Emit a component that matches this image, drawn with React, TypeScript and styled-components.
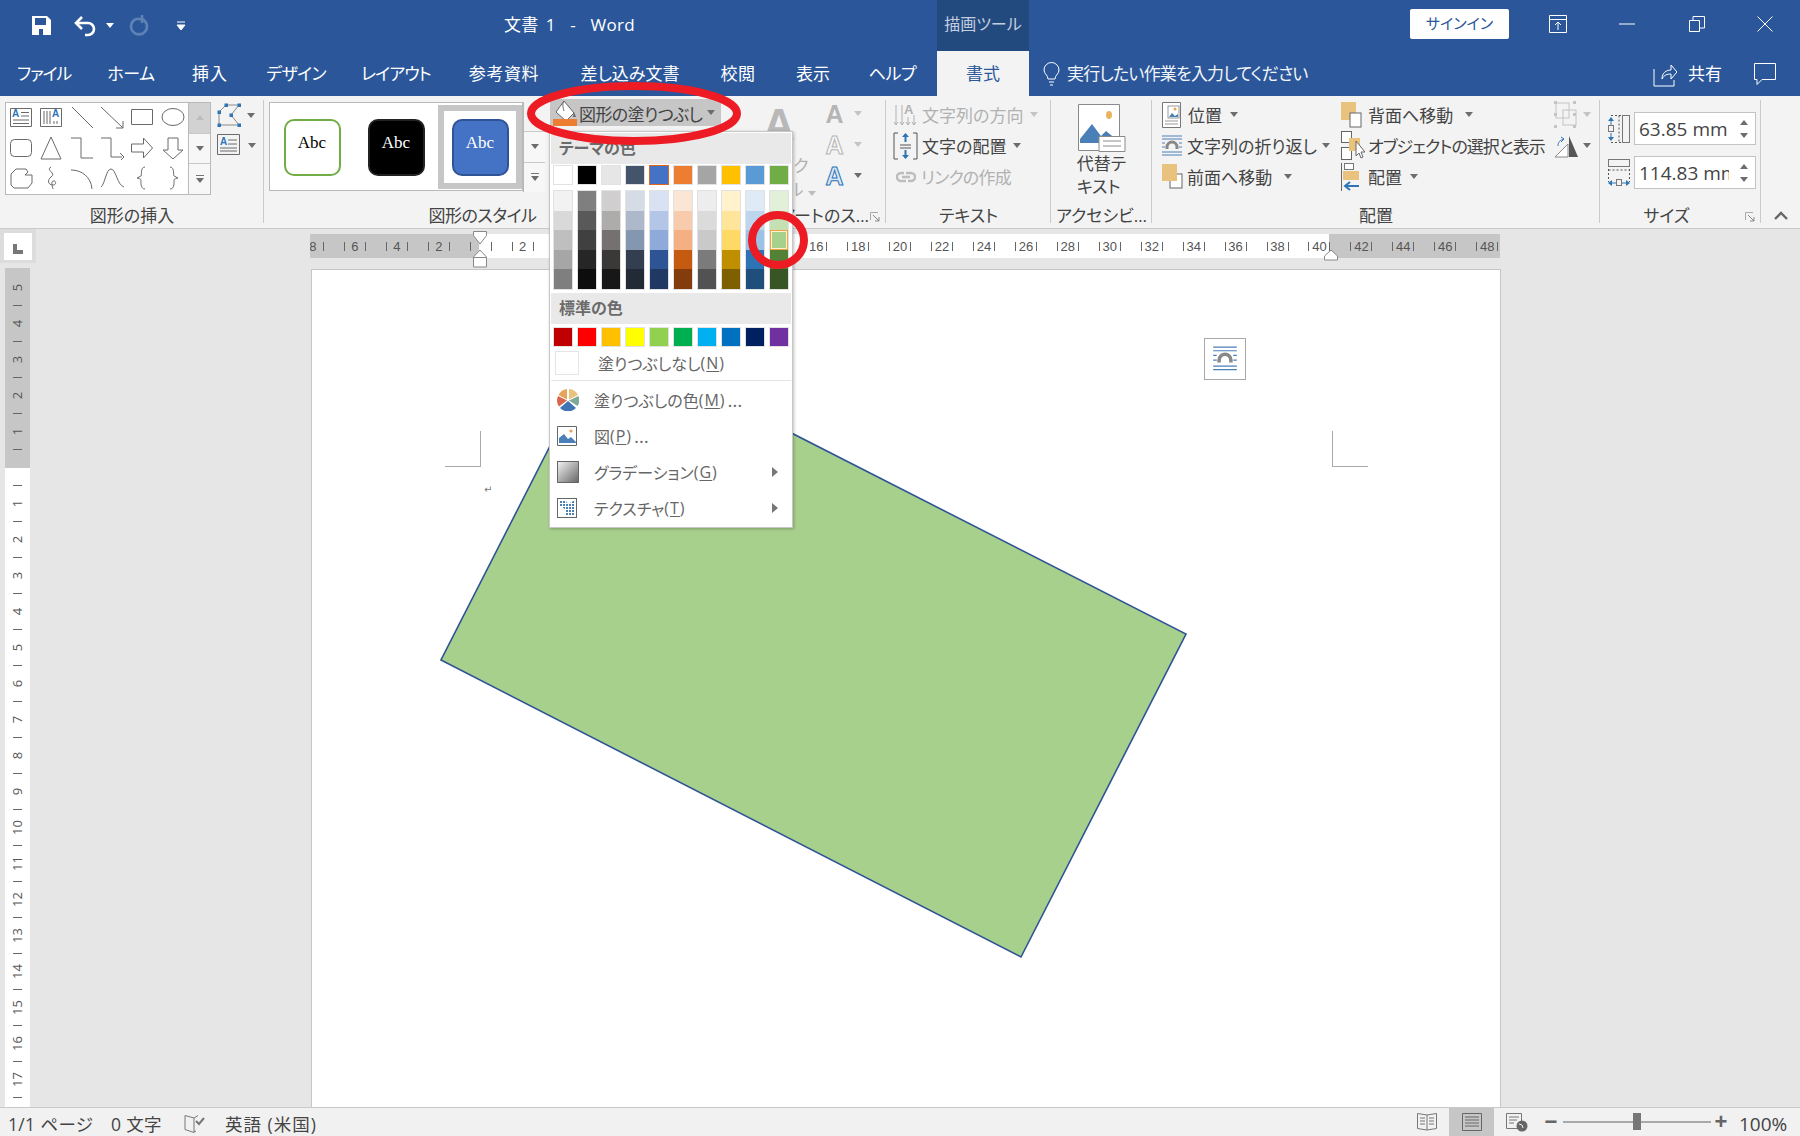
import React from "react";
import styled, { createGlobalStyle } from "styled-components";

const GlobalStyle = createGlobalStyle`
  html, body { margin: 0; padding: 0; background: #e6e6e6; }
  * { box-sizing: border-box; }
  body {
    font-family: "Open Sans", "Noto Sans CJK JP", sans-serif;
    font-feature-settings: "palt";
    font-size: 17px;
    color: #444;
  }
`;

const BLUE = "#2b579a";

const Root = styled.div`
  position: relative;
  width: 1800px;
  height: 1136px;
  overflow: hidden;
  display: flex;
  flex-direction: column;
`;

/* title bar */
const TitleBar = styled.div`
  height: 51px;
  background: ${BLUE};
  display: flex;
  color: #fff;
`;
const Qat = styled.div`
  width: 504px;
  padding-left: 32px;
  display: flex;
  align-items: center;
`;
const QatSlot = styled.div<{ $w: number }>`
  width: ${(p) => p.$w}px;
  display: flex;
  align-items: center;
`;
const DocTitle = styled.div`
  width: 433px;
  line-height: 49px;
  font-size: 17px;
  letter-spacing: 0.3px;
  word-spacing: 2.5px;
`;
const ToolsTab = styled.div`
  width: 92px;
  background: #234a7e;
  color: #c3cfe0;
  text-align: center;
  line-height: 49px;
  font-size: 16px;
`;
const WindowArea = styled.div`
  flex: 1;
  display: flex;
  align-items: center;
  padding-left: 381px;
`;
const SignIn = styled.div`
  width: 99px;
  height: 30px;
  margin-top: -3px;
  border-radius: 2px;
  background: #fff;
  color: ${BLUE};
  text-align: center;
  line-height: 29px;
  font-size: 15px;
`;
const WinBtn = styled.div<{ $w: number }>`
  width: ${(p) => p.$w}px;
  display: flex;
  justify-content: center;
  margin-top: -3px;
`;

/* tabs */
const TabRow = styled.div`
  height: 45px;
  background: ${BLUE};
  display: flex;
  color: #fff;
  line-height: 45px;
`;
const Tab = styled.div<{ $w: number; $ls?: number; $active?: boolean }>`
  width: ${(p) => p.$w}px;
  flex-shrink: 0;
  text-align: center;
  letter-spacing: ${(p) => p.$ls ?? 0}px;
  background: ${(p) => (p.$active ? "#f3f3f3" : "transparent")};
  color: ${(p) => (p.$active ? BLUE : "#fff")};
`;
const TellMe = styled.div`
  display: flex;
  align-items: center;
  gap: 7px;
  padding-left: 14px;
  width: 602px;
  flex-shrink: 0;
  color: #f2f5f9;
  letter-spacing: -0.8px;
`;
const Share = styled.div`
  display: flex;
  align-items: center;
  gap: 11px;
  padding-left: 22px;
  width: 123px;
  flex-shrink: 0;
`;
const Comment = styled.div`
  display: flex;
  align-items: center;
`;

/* ribbon */
const Ribbon = styled.div`
  height: 133px;
  background: #f3f3f3;
  border-bottom: 1px solid #c9c9c9;
  display: flex;
  padding-top: 4px;
`;
const Group = styled.div<{ $w: number; $plain?: boolean }>`
  position: relative;
  width: ${(p) => p.$w}px;
  flex-shrink: 0;
  display: flex;
  flex-direction: column;
  &::after {
    content: "";
    display: ${(p) => (p.$plain ? "none" : "block")};
    position: absolute;
    right: 0;
    top: 0;
    bottom: 5px;
    width: 1px;
    background: #cbcbcb;
  }
`;
const GroupBody = styled.div<{ $pl?: number; $pt?: number }>`
  flex: 1;
  min-height: 0;
  display: flex;
  padding-left: ${(p) => p.$pl ?? 0}px;
  padding-top: ${(p) => p.$pt ?? 0}px;
`;
const GroupLabel = styled.div<{ $pr?: number; $ls?: number }>`
  height: 24px;
  line-height: 24px;
  text-align: center;
  white-space: nowrap;
  overflow: hidden;
  letter-spacing: ${(p) => p.$ls ?? 0}px;
  padding-right: ${(p) => p.$pr ?? 0}px;
  color: #444;
`;
const Expander = styled.svg`
  position: absolute;
  right: 6px;
  bottom: 6px;
`;
const Gallery = styled.div<{ $mt: number; $h: number }>`
  margin-top: ${(p) => p.$mt}px;
  height: ${(p) => p.$h}px;
  display: flex;
  background: #fff;
  border: 1px solid #b9b9b9;
`;
const ShapeGrid = styled.div`
  width: 182px;
  margin-top: -1px;
  display: grid;
  grid-template-columns: repeat(6, 1fr);
  grid-auto-rows: 30.5px;
  place-items: center;
`;
const ScrollCol = styled.div<{ $mt?: number; $h?: number }>`
  width: 22px;
  margin-top: ${(p) => p.$mt ?? 0}px;
  ${(p) => (p.$h ? `height: ${p.$h}px;` : "")}
  display: flex;
  flex-direction: column;
  border-left: 1px solid #b9b9b9;
  background: #f3f3f3;
`;
const ScrollBtn = styled.div<{ $off?: boolean; $bare?: boolean }>`
  flex: 1;
  display: flex;
  flex-direction: column;
  align-items: center;
  justify-content: center;
  gap: 2px;
  background: ${(p) => (p.$off ? "#d2d2d2" : p.$bare ? "#f3f3f3" : "#f7f7f7")};
  border-bottom: 1px solid #c9c9c9;
  &:last-child { border-bottom: none; }
`;
const Tri = styled.span<{ $up?: boolean; $c?: string; $ml?: number }>`
  display: inline-block;
  flex-shrink: 0;
  margin-left: ${(p) => p.$ml ?? 0}px;
  width: 0;
  height: 0;
  border-left: 4px solid transparent;
  border-right: 4px solid transparent;
  ${(p) => (p.$up ? "border-bottom" : "border-top")}: 5px solid ${(p) => p.$c ?? "#6d6d6d"};
`;
const Dash = styled.span`
  display: block;
  width: 8px;
  height: 1px;
  background: #777;
`;
const SideTools = styled.div`
  width: 50px;
  margin-left: 6px;
  display: flex;
  flex-direction: column;
`;
const SideTool = styled.div`
  height: 30px;
  display: flex;
  align-items: center;
  gap: 4px;
`;
const StyleCell = styled.div<{ $sel?: boolean }>`
  width: 84px;
  height: 84px;
  display: flex;
  align-items: center;
  justify-content: center;
  margin-top: 2px;
  border: ${(p) => (p.$sel ? "6px solid #c6c6c6" : "6px solid transparent")};
`;
const StyleChip = styled.div<{ $bg: string; $bd: string; $fg: string }>`
  width: 57px;
  height: 57px;
  border-radius: 10px;
  background: ${(p) => p.$bg};
  border: 2px solid ${(p) => p.$bd};
  color: ${(p) => p.$fg};
  display: flex;
  align-items: center;
  justify-content: center;
  font: 17px "Liberation Serif", serif;
  padding-bottom: 8px;
`;
const FillButton = styled.div`
  width: 171px;
  height: 27px;
  margin: -1px 0 0 5px;
  padding-left: 3px;
  background: #c6c6c6;
  display: flex;
  align-items: center;
  gap: 2px;
  color: #444;
  white-space: nowrap;
  letter-spacing: -0.6px;
`;
const FillLabel = styled.span`
  padding-top: 2px;
`;
const Rows = styled.div`
  margin-top: -1px;
  display: flex;
  flex-direction: column;
  flex-shrink: 0;
`;
const RowBtn = styled.div<{ $off?: boolean; $gap?: number; $ls?: number }>`
  height: 31px;
  display: flex;
  align-items: center;
  gap: ${(p) => p.$gap ?? 5}px;
  white-space: nowrap;
  letter-spacing: ${(p) => p.$ls ?? 0}px;
  color: ${(p) => (p.$off ? "#b1b1b1" : "#444")};
`;
const LinkSlot = styled.span`
  margin: 0 1px 0 3px;
`;
const QuickStyle = styled.div`
  width: 88px;
  display: flex;
  flex-direction: column;
  align-items: center;
  color: #b1b1b1;
  line-height: 24px;
  padding-left: 2px;
`;
const BigA = styled.div`
  font: bold 44px/50px "Liberation Sans", sans-serif;
  color: #b8b8b8;
  height: 54px;
`;
const LetterCol = styled.div`
  margin: -2px 0 0 2px;
  display: flex;
  flex-direction: column;
`;
const LetterRow = styled.div`
  height: 31px;
  display: flex;
  align-items: center;
  gap: 9px;
`;
const Letter = styled.span<{ $kind: "solid" | "line" | "blue" }>`
  font: bold 25px/30px "Liberation Sans", sans-serif;
  width: 21px;
  text-align: center;
  color: ${(p) => (p.$kind === "solid" ? "#b5b5b5" : p.$kind === "line" ? "#f7f7f7" : "#d8e8f7")};
  -webkit-text-stroke: ${(p) =>
    p.$kind === "line" ? "1px #b5b5b5" : p.$kind === "blue" ? "1px #2e75b6" : "0"};
`;
const BigButton = styled.div`
  width: 100%;
  display: flex;
  flex-direction: column;
  align-items: center;
  line-height: 23px;
`;
const ArrangeGrid = styled.div`
  display: grid;
  grid-template-columns: 179px 213px 1fr;
`;
const SizeCol = styled.div`
  display: flex;
  flex-direction: column;
  gap: 11px;
  padding-top: 12px;
`;
const SizeRow = styled.div`
  display: flex;
  align-items: center;
  gap: 4px;
`;
const SpinBox = styled.div`
  width: 122px;
  height: 33px;
  display: flex;
  align-items: center;
  background: #fff;
  border: 1px solid #c3c3c3;
  padding: 0 4px 0 4px;
  color: #444;
  font-size: 19px;
`;
const SpinValue = styled.div`
  width: 90px;
  overflow: hidden;
  white-space: nowrap;
`;
const SpinArrows = styled.div`
  width: 14px;
  margin-left: auto;
  display: flex;
  flex-direction: column;
  align-items: center;
  gap: 8px;
`;
const Collapse = styled.div`
  flex: 1;
  display: flex;
  align-items: flex-end;
  justify-content: center;
  padding-bottom: 8px;
`;

/* workspace */
const Workspace = styled.div`
  height: 879px;
  display: flex;
  background: #e6e6e6;
  border-bottom: 1px solid #c9c9c9;
`;
const LeftCol = styled.div`
  width: 36px;
  display: flex;
  flex-direction: column;
`;
const CornerWrap = styled.div`
  height: 34px;
  background: #dcdcdc;
  padding: 4px 4px 3px;
`;
const Corner = styled.div`
  height: 27px;
  background: #fff;
  display: flex;
  align-items: center;
  justify-content: center;
  padding-top: 5px;
`;
const VRuler = styled.div`
  width: 25px;
  margin: 5px 0 0 5px;
  flex: 1;
  min-height: 0;
  display: flex;
  flex-direction: column;
`;
const VSection = styled.div<{ $gray?: boolean; $pt: number; $h?: number }>`
  background: ${(p) => (p.$gray ? "#c6c6c6" : "#fff")};
  padding-top: ${(p) => p.$pt}px;
  ${(p) => (p.$h ? `height: ${p.$h}px;` : "flex: 1; min-height: 0; overflow: hidden;")}
`;
const VCell = styled.div`
  height: 18px;
  display: flex;
  align-items: center;
  justify-content: center;
  font-size: 13px;
  color: #555;
`;
const VNum = styled.span`
  display: block;
  transform: rotate(-90deg);
  line-height: 13px;
`;
const VTick = styled.span`
  width: 9px;
  height: 1px;
  background: #666;
`;
const MainCol = styled.div`
  flex: 1;
  min-width: 0;
  display: flex;
  flex-direction: column;
`;
const HRulerWrap = styled.div`
  position: relative;
  width: 1190px;
  margin: 5px 0 0 274px;
  height: 24px;
`;
const HRuler = styled.div`
  height: 24px;
  overflow: hidden;
  display: flex;
  background: linear-gradient(to right, #c6c6c6 169px, #fff 169px, #fff 1019px, #c6c6c6 1019px);
`;
const HCell = styled.div<{ $first?: boolean }>`
  flex: 0 0 41.95px;
  margin-left: ${(p) => (p.$first ? "-18px" : "0")};
  padding-top: 1px;
  display: flex;
  align-items: center;
  justify-content: center;
  font: 13px "Liberation Sans", sans-serif;
  color: #555;
`;
const HTick = styled.span`
  width: 1px;
  height: 9px;
  background: #666;
`;
const HNum = styled.span`
  width: 20px;
  text-align: center;
`;
const Marker = styled.svg<{ $x: number }>`
  position: absolute;
  top: -3px;
  left: ${(p) => p.$x}px;
`;
const Page = styled.div`
  position: relative;
  flex: 1;
  width: 1190px;
  margin: 11px 0 0 275px;
  background: #fff;
  border: 1px solid #c6c6c6;
  border-bottom: none;
`;
const ShapeCanvas = styled.svg`
  position: absolute;
  left: -1px;
  top: -1px;
`;
const Crop = styled.div<{ $x: number; $flip?: boolean }>`
  position: absolute;
  left: ${(p) => p.$x}px;
  top: 161px;
  width: 36px;
  height: 36px;
  border-bottom: 1px solid #a9a9a9;
  ${(p) => (p.$flip ? "border-left" : "border-right")}: 1px solid #a9a9a9;
`;
const ParaMark = styled.div`
  position: absolute;
  left: 172px;
  top: 214px;
  font: 10px "DejaVu Sans", sans-serif;
  color: #777;
`;
const Anchor = styled.div`
  position: absolute;
  left: 892px;
  top: 68px;
  width: 42px;
  height: 42px;
  background: #fff;
  border: 1px solid #a9a9a9;
  display: flex;
  align-items: center;
  justify-content: center;
`;

/* status bar */
const StatusBar = styled.div`
  height: 28px;
  background: #f1f1f1;
  display: flex;
  align-items: center;
  color: #444;
  font-size: 17.5px;
  white-space: nowrap;
`;
const StatusLeft = styled.div`
  display: flex;
  align-items: center;
  padding: 3px 0 0 8px;
  width: 1405px;
  letter-spacing: 0.35px;
`;
const StatusItem = styled.span<{ $w: number }>`
  width: ${(p) => p.$w}px;
  display: flex;
  align-items: center;
`;
const Lang = styled.span`
  letter-spacing: 1px;
`;
const ViewBtn = styled.div<{ $on?: boolean; $w: number }>`
  width: ${(p) => p.$w}px;
  height: 28px;
  background: ${(p) => (p.$on ? "#c6c6c6" : "transparent")};
  display: flex;
  align-items: center;
  justify-content: center;
`;
const Zoom = styled.div`
  width: 148px;
  height: 2px;
  background: #a9a9a9;
  margin: 0 2px 0 4px;
  position: relative;
`;
const ZoomThumb = styled.div`
  position: absolute;
  left: 70px;
  top: -8px;
  width: 8px;
  height: 17px;
  background: #777;
`;
const ZoomSign = styled.span<{ $ml?: number }>`
  width: 16px;
  margin-left: ${(p) => p.$ml ?? 0}px;
  font: bold 22px/24px "Liberation Sans", sans-serif;
  color: #666;
  text-align: center;
`;
const ZoomPct = styled.span`
  margin-left: 10px;
  padding-top: 3px;
  font-size: 19px;
`;

/* dropdown */
const Menu = styled.div`
  position: absolute;
  left: 549px;
  top: 131px;
  width: 244px;
  height: 397px;
  background: #fff;
  border: 1px solid #c6c6c6;
  box-shadow: 1px 1px 3px rgba(0, 0, 0, 0.25);
  padding: 1px;
  display: flex;
  flex-direction: column;
`;
const MenuHead = styled.div<{ $mt?: number }>`
  height: 31px;
  flex-shrink: 0;
  margin-top: ${(p) => p.$mt ?? 0}px;
  background: #e9e9e9;
  padding-left: 8px;
  font-weight: 700;
  line-height: 31px;
  color: #6b6b6b;
  font-size: 16px;
`;
const SwatchRow = styled.div<{ $mt: number }>`
  display: grid;
  grid-template-columns: repeat(10, 20px);
  column-gap: 4px;
  padding-left: 2px;
  margin-top: ${(p) => p.$mt}px;
`;
const Swatch = styled.div<{ $c: string; $sel?: boolean }>`
  height: 20px;
  background: ${(p) => p.$c};
  border: 1px solid ${(p) => (p.$sel ? "#e2631a" : "#e2e2e2")};
`;
const Ramp = styled.div`
  display: flex;
  flex-direction: column;
  border: 1px solid #e2e2e2;
`;
const RampCell = styled.div<{ $c: string; $sel?: boolean }>`
  height: 19.6px;
  background: ${(p) => p.$c};
  ${(p) => (p.$sel ? "outline: 1px solid #f2a33a; outline-offset: -1px; box-shadow: inset 0 0 0 2px #fff2d6; position: relative;" : "")}
`;
const NoFill = styled.div`
  height: 34px;
  flex-shrink: 0;
  display: flex;
  align-items: center;
  padding-left: 4px;
  border-bottom: 1px solid #e3e3e8;
  color: #666;
  font-size: 16px;
`;
const NoFillBox = styled.span`
  width: 24px;
  height: 24px;
  margin-right: 19px;
  border: 1px solid #e3e3e8;
`;
const MenuItems = styled.div`
  padding-top: 1px;
`;
const MenuItem = styled.div`
  height: 36px;
  display: flex;
  align-items: center;
  padding-left: 6px;
  color: #666;
  font-size: 16px;
`;
const MenuIcon = styled.span`
  width: 37px;
  display: flex;
`;
const MenuArrow = styled.span`
  margin-left: auto;
  margin-right: 13px;
  width: 0;
  height: 0;
  border-top: 5px solid transparent;
  border-bottom: 5px solid transparent;
  border-left: 6px solid #777;
`;
const Mnem = styled.span`
  letter-spacing: 1px;
`;
const Dots = styled.span`
  font-family: "Open Sans", sans-serif;
  font-size: 19px;
  line-height: 16px;
  margin-left: 2px;
`;
const Key = styled.u`
  text-underline-offset: 2px;
`;
const Annotations = styled.svg`
  position: absolute;
  left: 0;
  top: 0;
  pointer-events: none;
`;

/* icons */
const S = "#6a6a6a";
const L = "#4a7fb8";
const G = "#e9c27e";

const Ico = ({ w = 24, h = 24, vb, children }: { w?: number; h?: number; vb?: string; children: React.ReactNode }) => (
  <svg width={w} height={h} viewBox={vb ?? `0 0 ${w} ${h}`} fill="none" style={{ display: "block", flexShrink: 0 }}>
    {children}
  </svg>
);

const gl = (d: string, extra?: React.ReactNode) => (
  <Ico>
    <path d={d} stroke={S} strokeWidth="1" />
    {extra}
  </Ico>
);

const GalleryA = ({ x, y }: { x: number; y: number }) => (
  <text x={x} y={y} fontSize="10" fontWeight="700" fontFamily="Liberation Sans" fill="#2e75b6">A</text>
);

const shapeIcons = [
  gl("M1.5 3.5h21v18h-21zM12 7.5h8M12 11h8M4 15h16M4 18.5h16", <GalleryA x={3} y={12} />),
  gl("M1.5 3.5h21v18h-21zM5 6v13M8 6v13M11 6v13M15 16v3M18 16v3", <GalleryA x={13} y={12} />),
  gl("M2 2l21 21"),
  gl("M1 2l22 21M23 16v7h-7"),
  gl("M1.5 4.5h21v15h-21z"),
  <Ico key="oval"><ellipse cx="12" cy="12" rx="11" ry="8.5" stroke={S} /></Ico>,
  <Ico key="rr"><rect x="1.5" y="3.5" width="21" height="17" rx="4" stroke={S} /></Ico>,
  gl("M12 1L2 23h20z"),
  gl("M1 2h10v20h12"),
  gl("M1 2h10v19h11M20 17l4 4-4 4"),
  gl("M1.5 8h12V2l9 10-9 10v-6h-12z"),
  gl("M7 2h10v12h5L12 23 2 14h5z"),
  gl("M7 3h10l2 3-3 3h7v8l-4 5H5l-3-3V8z"),
  gl("M12 1c-6 3 6 6 0 10-4 3-3 8 2 8 4 0 3-5 0-4-2 1-1 4 0 8M12 1"),
  gl("M1 4c11 0 20 7 21 19"),
  gl("M1 21C5 18 6 3 11 3s6 16 13 18"),
  gl("M15 1c-5 0-3 9-4 9s-3 2-4 2c1 0 4 1 4 2s-1 9 4 9"),
  gl("M9 1c5 0 3 9 4 9s3 2 4 2c-1 0-4 1-4 2s1 9-4 9"),
];

const EditPoints = () => (
  <Ico w={26} h={26}>
    <path d="M2 10L9 3h13l-8 10 8 10H2z" stroke="#8a8a8a" />
    {[[2, 10], [9, 3], [22, 3], [14, 13], [22, 23], [2, 23]].map(([x, y]) => (
      <rect key={`${x}-${y}`} x={x - 1.5} y={y - 1.5} width="3.5" height="3.5" fill="#2e75b6" />
    ))}
  </Ico>
);
const TextBoxTool = () => (
  <Ico w={24} h={22}>
    <path d="M.5.5h22v20H.5zM11 6h9M11 10h9M3 14h17M3 17h17" stroke={S} />
    <GalleryA x={3} y={11} />
  </Ico>
);
const Bucket = () => (
  <Ico w={24} h={26}>
    <path d="M11 1l10 12-8 8-10-9z" fill="#fff" stroke="#666" />
    <path d="M11 2c-2 0-1 6 0 9" stroke="#666" />
    <path d="M21 12l2 5-3 0z" fill="#666" />
    <rect x="0" y="19" width="24" height="7" fill="#ed7d31" />
  </Ico>
);
const TextDir = () => (
  <Ico w={25} h={28}>
    <path d="M3 4v20M9 4v20M21 14v10M1 21l2 3 2-3M7 21l2 3 2-3M19 21l2 3 2-3M15 16v8M13 21l2 3 2-3" stroke="#b1b1b1" />
    <text x="11" y="13" fontSize="13" fontWeight="700" fontFamily="Liberation Sans" fill="#b1b1b1">A</text>
  </Ico>
);
const TextAlign = () => (
  <Ico w={25} h={28}>
    <path d="M5 1H1v26h4M20 1h4v26h-4M7 13h11M7 16h11" stroke="#555" />
    <path d="M12.5 2v8M12.5 18v8" stroke="#2e75b6" strokeWidth="2" />
    <path d="M9 5l3.5-4L16 5zM9 23l3.5 4 3.5-4z" fill="#2e75b6" />
  </Ico>
);
const LinkIcon = () => (
  <Ico w={20} h={14}>
    <path d="M8 3H5a4 4 0 000 8h5M12 11h3a4 4 0 000-8h-5M6 7h8" stroke="#bdbdbd" strokeWidth="2.5" />
  </Ico>
);
const AltText = () => (
  <Ico w={48} h={48}>
    <path d="M.5.5h41v46H.5z" fill="#fff" stroke="#8a8a8a" />
    <ellipse cx="31" cy="11" rx="3" ry="4" fill="#e9b45f" />
    <path d="M2 35L14 20l9 12 5-5 11 9v3H2z" fill="#4a7fb8" />
    <path d="M21 32.5h26v15H21z" fill="#fff" stroke="#8a8a8a" />
    <path d="M25 37h18M25 42h18" stroke="#8a8a8a" />
  </Ico>
);
const PositionIcon = () => (
  <Ico w={20} h={26}>
    <path d="M.5.5h18v25H.5z" fill="#fff" stroke="#777" />
    <path d="M3 19h13M3 22h13" stroke="#999" />
    <rect x="6" y="4" width="11" height="12" fill="#fff" stroke="#999" />
    <path d="M7 15l3-4 3 3 3-2v3z" fill="#4a7fb8" />
    <circle cx="13" cy="7" r="1.5" fill="#e9a04f" />
  </Ico>
);
const WrapIcon = ({ w = 20, h = 22 }: { w?: number; h?: number }) => (
  <Ico w={w} h={h} vb="0 0 20 22">
    <path d="M0 1h20M0 4h20M0 8h3M17 8h3M0 12h3M17 12h3M0 17h20M0 20h20" stroke={L} />
    <path d="M5 14v-2a5 5 0 0110 0v2" stroke="#888" strokeWidth="3" />
  </Ico>
);
const FrontIcon = () => (
  <Ico w={21} h={26}>
    <rect x="8" y="10" width="12" height="14" fill="#fff" stroke="#666" />
    <rect x="0" y="0" width="15" height="17" fill={G} />
  </Ico>
);
const BackIcon = () => (
  <Ico w={21} h={26}>
    <rect x="0" y="0" width="15" height="18" fill={G} />
    <rect x="9" y="11" width="11" height="14" fill="#fff" stroke="#666" />
  </Ico>
);
const SelectIcon = () => (
  <Ico w={24} h={29}>
    <rect x=".5" y=".5" width="10" height="11" fill="#fff" stroke="#666" />
    <rect x=".5" y="16.5" width="10" height="12" fill="#fff" stroke="#666" />
    <rect x="8" y="7" width="11" height="13" fill={G} />
    <path d="M15 10v15l3-3 2 5 2-1-2-5h4z" fill="#fff" stroke="#666" />
  </Ico>
);
const AlignIcon = () => (
  <Ico w={20} h={28}>
    <path d="M.5 0v28" stroke="#666" />
    <rect x="3.5" y=".5" width="9" height="6" fill="#fff" stroke="#777" />
    <rect x="2" y="8" width="16" height="9" fill={G} />
    <path d="M18 23H5M9 19l-5 4 5 4" stroke="#2e75b6" strokeWidth="2" />
  </Ico>
);
const GroupIcon = () => (
  <Ico w={24} h={27}>
    <rect x="2" y="2" width="13" height="15" stroke="#c4c4c4" />
    <rect x="9" y="9" width="13" height="15" stroke="#c4c4c4" />
    {[[0, 0], [19, 0], [0, 24], [19, 24], [0, 12], [19, 12]].map(([x, y]) => (
      <rect key={`${x}-${y}`} x={x} y={y} width="3" height="3" fill="#c4c4c4" />
    ))}
  </Ico>
);
const RotateIcon = () => (
  <Ico w={24} h={24}>
    <path d="M1 23L14 10v13z" fill="#fff" stroke="#8a8a8a" />
    <path d="M15 2l9 21h-9z" fill="#555" />
    <path d="M4 12c0-4 2-6 6-7M7 3l3 2-3 3" stroke="#2e75b6" />
  </Ico>
);
const HeightIcon = () => (
  <Ico w={22} h={28}>
    <path d="M3 .5h11M3 27.5h11M11 .5v27" stroke="#555" strokeDasharray="2 2" />
    <rect x="14.5" y=".5" width="7" height="27" stroke="#777" />
    <path d="M3 3v7M3 18v7" stroke="#2e75b6" />
    <path d="M0 6l3-4 3 4zM0 22l3 4 3-4z" fill="#2e75b6" />
    <rect x=".5" y="10.5" width="5" height="6" stroke="#777" />
  </Ico>
);
const WidthIcon = () => (
  <Ico w={22} h={28}>
    <rect x=".5" y=".5" width="21" height="7" stroke="#777" />
    <path d="M.5 10v13M21.5 10v13M.5 11h21" stroke="#555" strokeDasharray="2 2" />
    <rect x="8.5" y="20.5" width="5" height="6" stroke="#777" />
    <path d="M3 24h5M14 24h5" stroke="#2e75b6" />
    <path d="M4 21l-4 3 4 3zM18 21l4 3-4 3z" fill="#2e75b6" />
  </Ico>
);
const Pie = () => (
  <Ico w={22} h={22}>
    <path d="M12 10.500V0a11 11 0 019 6z" fill="#e9c27e" />
    <path d="M12 11.500l9.500-4.500a11 11 0 01-1 10z" fill="#7fa898" />
    <path d="M11 12l8 7a11 11 0 01-16 0z" fill="#3f74b5" />
    <path d="M10 11.500l-8 6a11 11 0 01-1-10.500z" fill="#d9664a" />
    <path d="M10 10.500L1.500 6a11 11 0 018.500-6z" fill="#e6a35c" />
  </Ico>
);
const PictureItem = () => (
  <Ico w={20} h={20}>
    <path d="M.5.5h19v19H.5z" fill="#fff" stroke="#666" />
    <circle cx="14" cy="5" r="1.6" fill="#e9a04f" />
    <path d="M2 17v-5l5-4 4 5 3-2 5 5v1z" fill="#4a7fb8" />
  </Ico>
);
const GradientItem = () => (
  <Ico w={22} h={22}>
    <defs>
      <linearGradient id="gi" x1="0" y1="0" x2="1" y2="1">
        <stop offset="0" stopColor="#f4f4f4" />
        <stop offset="1" stopColor="#666" />
      </linearGradient>
    </defs>
    <rect x=".5" y=".5" width="21" height="21" fill="url(#gi)" stroke="#666" />
  </Ico>
);
const TextureItem = () => (
  <Ico w={20} h={20}>
    <defs>
      <pattern id="tx" width="3" height="3" patternUnits="userSpaceOnUse">
        <rect width="2" height="2" fill="#4a7fb8" />
      </pattern>
    </defs>
    <rect x=".5" y=".5" width="19" height="19" fill="#fff" stroke="#666" />
    <path d="M2 2h6l3 4 7-4v16H9V12L5 9H2z" fill="url(#tx)" />
  </Ico>
);

const themeTop = ["#ffffff", "#000000", "#e7e6e6", "#44546a", "#4472c4", "#ed7d31", "#a5a5a5", "#ffc000", "#5b9bd5", "#70ad47"];
const ramps = [
  ["#f2f2f2", "#d9d9d9", "#bfbfbf", "#a6a6a6", "#7f7f7f"],
  ["#7f7f7f", "#595959", "#404040", "#262626", "#0d0d0d"],
  ["#d0cece", "#aeabab", "#767171", "#3b3838", "#181717"],
  ["#d6dce5", "#adb9ca", "#8497b0", "#333f50", "#222a35"],
  ["#d9e2f3", "#b4c6e7", "#8eaadb", "#2f5496", "#1f3864"],
  ["#fbe5d5", "#f7cbac", "#f4b083", "#c55a11", "#833c0b"],
  ["#ededed", "#dbdbdb", "#c9c9c9", "#7b7b7b", "#525252"],
  ["#fff2cc", "#fee599", "#ffd965", "#bf8f00", "#7f6000"],
  ["#deeaf6", "#bdd6ee", "#9cc3e5", "#2e74b5", "#1e4e79"],
  ["#e2efd9", "#c5e0b3", "#a8d08d", "#538135", "#375623"],
];
const standard = ["#c00000", "#ff0000", "#ffc000", "#ffff00", "#92d050", "#00b050", "#00b0f0", "#0070c0", "#002060", "#7030a0"];

const tabs: [string, number, number][] = [
  ["ファイル", 88, -1.2], ["ホーム", 86, -0.4], ["挿入", 72, 1], ["デザイン", 100, -0.7], ["レイアウト", 100, -0.9],
  ["参考資料", 116, 0.6], ["差し込み文書", 136, 0], ["校閲", 80, 0.5], ["表示", 70, 0], ["ヘルプ", 89, -0.4],
];
const hLabels = ["8", "6", "4", "2", "", ...Array.from({ length: 24 }, (_, i) => String((i + 1) * 2))];

const ExpanderIcon = () => (
  <Expander width="10" height="10" viewBox="0 0 10 10" fill="none">
    <path d="M.5 8V.5H8" stroke="#aaa" />
    <path d="M3 3l6 6M9 5v4H5" stroke="#888" />
  </Expander>
);

export default function App() {
  return (
    <Root>
      <GlobalStyle />
      <TitleBar>
        <Qat>
          <QatSlot $w={41}>
            <Ico w={19} h={19}>
              <path d="M0 0h15l4 4v15H0z" fill="#fff" />
              <path d="M3 2h11v7H3z" fill={BLUE} />
              <path d="M7 13h4v6H7z" fill={BLUE} />
            </Ico>
          </QatSlot>
          <QatSlot $w={55}>
            <Ico w={24} h={22}>
              <path d="M4 8h11a6 6 0 010 12h-3" stroke="#fff" strokeWidth="2.6" />
              <path d="M9 2L3 8l6 6" stroke="#fff" strokeWidth="2.6" />
            </Ico>
            <Tri $c="#fff" $ml={9} />
          </QatSlot>
          <QatSlot $w={48}>
            <Ico w={22} h={24}>
              <path d="M14 5a8 8 0 11-6 0" stroke="#5f82b5" strokeWidth="2.6" />
              <path d="M14 1v8M8 5h7" stroke="#5f82b5" strokeWidth="2.6" />
            </Ico>
          </QatSlot>
          <QatSlot $w={20}>
            <Ico w={10} h={10}>
              <path d="M1 1h8M1 4h8l-4 5z" stroke="#fff" fill="#fff" />
            </Ico>
          </QatSlot>
        </Qat>
        <DocTitle>文書 1 &nbsp;-&nbsp; Word</DocTitle>
        <ToolsTab>描画ツール</ToolsTab>
        <WindowArea>
          <SignIn>サインイン</SignIn>
          <WinBtn $w={98}>
            <Ico w={20} h={20}>
              <path d="M1.5 1.5h17v17h-17zM1.5 5.5h17M10 16V8M7 11l3-3 3 3" stroke="#fff" />
            </Ico>
          </WinBtn>
          <WinBtn $w={40}>
            <Ico w={16} h={2}><path d="M0 1h16" stroke="#fff" /></Ico>
          </WinBtn>
          <WinBtn $w={99}>
            <Ico w={16} h={16}>
              <path d="M.5 4.500h10v11H.5zM4 4V.5h11.500V12H11" stroke="#fff" />
            </Ico>
          </WinBtn>
          <WinBtn $w={38}>
            <Ico w={16} h={16}><path d="M.5.5l15 15M15.500.5l-15 15" stroke="#fff" /></Ico>
          </WinBtn>
        </WindowArea>
      </TitleBar>

      <TabRow>
        {tabs.map(([t, w, ls]) => (
          <Tab key={t} $w={w} $ls={ls}>{t}</Tab>
        ))}
        <Tab $w={92} $active>書式</Tab>
        <TellMe>
          <Ico w={17} h={24}>
            <path d="M5 17c0-4-4-5-4-9a7.500 7.500 0 0115 0c0 4-4 5-4 9zM6 20h5M7 23h3" stroke="#fff" />
          </Ico>
          実行したい作業を入力してください
        </TellMe>
        <Share>
          <Ico w={24} h={26}>
            <path d="M1 8v17h20v-6M9 18c0-6 4-9 9-9V4l6 7-6 7v-5c-4 0-7 1-9 5z" stroke="#fff" />
          </Ico>
          共有
        </Share>
        <Comment>
          <Ico w={22} h={24}>
            <path d="M.5 1.500h21v16H8l-5 5v-5H.5z" stroke="#fff" />
          </Ico>
        </Comment>
      </TabRow>

      <Ribbon>
        <Group $w={264}>
          <GroupBody $pl={5}>
            <Gallery $mt={2} $h={93}>
              <ShapeGrid>
                {shapeIcons.map((ic, i) => (
                  <React.Fragment key={i}>{ic}</React.Fragment>
                ))}
              </ShapeGrid>
              <ScrollCol>
                <ScrollBtn $off><Tri $up $c="#bdbdbd" /></ScrollBtn>
                <ScrollBtn><Tri /></ScrollBtn>
                <ScrollBtn><Dash /><Tri /></ScrollBtn>
              </ScrollCol>
            </Gallery>
            <SideTools>
              <SideTool><EditPoints /><Tri /></SideTool>
              <SideTool><TextBoxTool /><Tri $ml={3} /></SideTool>
            </SideTools>
          </GroupBody>
          <GroupLabel>図形の挿入</GroupLabel>
        </Group>

        <Group $w={470} $plain>
          <GroupBody $pl={5}>
            <Gallery $mt={2} $h={89}>
              <StyleCell><StyleChip $bg="#fff" $bd="#70ad47" $fg="#000">Abc</StyleChip></StyleCell>
              <StyleCell><StyleChip $bg="#000" $bd="#222" $fg="#fff">Abc</StyleChip></StyleCell>
              <StyleCell $sel><StyleChip $bg="#4472c4" $bd="#2f5496" $fg="#fff">Abc</StyleChip></StyleCell>
            </Gallery>
            <ScrollCol $mt={2} $h={90}>
              <ScrollBtn $bare />
              <ScrollBtn><Tri /></ScrollBtn>
              <ScrollBtn><Dash /><Tri /></ScrollBtn>
            </ScrollCol>
            <FillButton>
              <Bucket />
              <FillLabel>図形の塗りつぶし</FillLabel>
              <Tri $ml={3} />
            </FillButton>
          </GroupBody>
          <GroupLabel $pr={33} $ls={-0.5}>図形のスタイル</GroupLabel>
        </Group>

        <Group $w={152}>
          <GroupBody>
            <QuickStyle>
              <BigA>A</BigA>
              <span>クイック</span>
              <span>スタイル<Tri $c="#bdbdbd" $ml={4} /></span>
            </QuickStyle>
            <LetterCol>
              <LetterRow><Letter $kind="solid">A</Letter><Tri $c="#c4c4c4" /></LetterRow>
              <LetterRow><Letter $kind="line">A</Letter><Tri $c="#c4c4c4" /></LetterRow>
              <LetterRow><Letter $kind="blue">A</Letter><Tri /></LetterRow>
            </LetterCol>
          </GroupBody>
          <GroupLabel $pr={44}>ワードアートのス…</GroupLabel>
          <ExpanderIcon />
        </Group>

        <Group $w={165}>
          <GroupBody $pl={7}>
            <Rows>
              <RowBtn $off $gap={4}><TextDir />文字列の方向<Tri $c="#c4c4c4" $ml={3} /></RowBtn>
              <RowBtn $gap={4}><TextAlign />文字の配置<Tri $ml={3} /></RowBtn>
              <RowBtn $off $gap={4} $ls={-0.8}><LinkSlot><LinkIcon /></LinkSlot>リンクの作成</RowBtn>
            </Rows>
          </GroupBody>
          <GroupLabel>テキスト</GroupLabel>
        </Group>

        <Group $w={101}>
          <GroupBody $pt={4}>
            <BigButton>
              <AltText />
              <span>代替テ<br />キスト</span>
            </BigButton>
          </GroupBody>
          <GroupLabel>アクセシビ…</GroupLabel>
        </Group>

        <Group $w={448}>
          <GroupBody $pl={10}>
            <ArrangeGrid>
              <Rows>
                <RowBtn $gap={6}><PositionIcon />位置<Tri $ml={2} /></RowBtn>
                <RowBtn $gap={5}><WrapIcon />文字列の折り返し<Tri /></RowBtn>
                <RowBtn $gap={4}><FrontIcon />前面へ移動<Tri $ml={8} /></RowBtn>
              </Rows>
              <Rows>
                <RowBtn $gap={6}><BackIcon />背面へ移動<Tri $ml={6} /></RowBtn>
                <RowBtn $gap={3} $ls={-1}><SelectIcon />オブジェクトの選択と表示</RowBtn>
                <RowBtn $gap={7}><AlignIcon />配置<Tri $ml={1} /></RowBtn>
              </Rows>
              <Rows>
                <RowBtn $gap={5}><GroupIcon /><Tri $c="#c4c4c4" /></RowBtn>
                <RowBtn $gap={5}><RotateIcon /><Tri /></RowBtn>
              </Rows>
            </ArrangeGrid>
          </GroupBody>
          <GroupLabel>配置</GroupLabel>
        </Group>

        <Group $w={161}>
          <GroupBody $pl={8}>
            <SizeCol>
              <SizeRow>
                <HeightIcon />
                <SpinBox>
                  <SpinValue>63.85 mm</SpinValue>
                  <SpinArrows><Tri $up /><Tri /></SpinArrows>
                </SpinBox>
              </SizeRow>
              <SizeRow>
                <WidthIcon />
                <SpinBox>
                  <SpinValue>114.83 mm</SpinValue>
                  <SpinArrows><Tri $up /><Tri /></SpinArrows>
                </SpinBox>
              </SizeRow>
            </SizeCol>
          </GroupBody>
          <GroupLabel $pr={28}>サイズ</GroupLabel>
          <ExpanderIcon />
        </Group>

        <Collapse>
          <Ico w={14} h={9}><path d="M1 8l6-6 6 6" stroke="#666" strokeWidth="2.4" /></Ico>
        </Collapse>
      </Ribbon>

      <Workspace>
        <LeftCol>
          <CornerWrap>
            <Corner>
              <Ico w={10} h={10}><path d="M0 0h4v6h6v4H0z" fill="#777" /></Ico>
            </Corner>
          </CornerWrap>
          <VRuler>
            <VSection $gray $pt={10} $h={200}>
              {[5, 4, 3, 2, 1].map((n) => (
                <React.Fragment key={n}>
                  <VCell><VNum>{n}</VNum></VCell>
                  <VCell><VTick /></VCell>
                </React.Fragment>
              ))}
            </VSection>
            <VSection $pt={8}>
              {Array.from({ length: 17 }, (_, i) => (
                <React.Fragment key={i}>
                  <VCell><VTick /></VCell>
                  <VCell><VNum>{i + 1}</VNum></VCell>
                </React.Fragment>
              ))}
              <VCell><VTick /></VCell>
            </VSection>
          </VRuler>
        </LeftCol>
        <MainCol>
          <HRulerWrap>
            <HRuler>
              {hLabels.map((n, i) => (
                <HCell key={i} $first={i === 0}>
                  <HTick />
                  <HNum>{n}</HNum>
                  <HTick />
                </HCell>
              ))}
            </HRuler>
            <Marker $x={163} width="14" height="37" viewBox="0 0 14 37" fill="none">
              <path d="M.5.5h13v4L7 13 .5 4.500zM7 19l6.500 7v10H.5V26z" fill="#fff" stroke="#888" />
              <path d="M.5 26.500h13" stroke="#888" />
            </Marker>
            <Marker $x={1014} width="14" height="30" viewBox="0 0 14 30" fill="none">
              <path d="M7 19l6.500 6v4H.5v-4z" fill="#fff" stroke="#888" />
            </Marker>
          </HRulerWrap>
          <Page>
            <ShapeCanvas width="1190" height="840" viewBox="0 0 1190 840">
              <polygon
                points="130,391 710,688 875,365 294,69"
                fill="#a8d08d"
                stroke="#2f5496"
                strokeWidth="1.6"
              />
            </ShapeCanvas>
            <Crop $x={133} />
            <Crop $x={1020} $flip />
            <ParaMark>↵</ParaMark>
            <Anchor>
              <WrapIcon w={30} h={26} />
            </Anchor>
          </Page>
        </MainCol>
      </Workspace>

      <StatusBar>
        <StatusLeft>
          <StatusItem $w={103}>1/1 ページ</StatusItem>
          <StatusItem $w={73}>0 文字</StatusItem>
          <StatusItem $w={41}>
            <Ico w={21} h={18}>
              <path d="M10 3L1 .5v14l9 3zM10 3l4-2.500M10 17l2-1" stroke="#777" />
              <path d="M12 6l3 3 5-6" stroke="#777" strokeWidth="2" />
            </Ico>
          </StatusItem>
          <Lang>英語 (米国)</Lang>
        </StatusLeft>
        <ViewBtn $w={44}>
          <Ico w={20} h={18}>
            <path d="M10 2L.5.5v15L10 17l9.500-1.500V.5zM10 2v15M3 5h5M3 8h5M3 11h5M12 5h5M12 8h5M12 11h5" stroke="#777" />
          </Ico>
        </ViewBtn>
        <ViewBtn $w={45} $on>
          <Ico w={20} h={18}>
            <path d="M.5.5h19v17H.5zM3 4h14M3 7h14M3 10h14M3 13h14" stroke="#666" />
          </Ico>
        </ViewBtn>
        <ViewBtn $w={46}>
          <Ico w={22} h={19}>
            <path d="M.5.500h15v15H.5zM3 4h10M3 7h8M3 10h5" stroke="#777" />
            <circle cx="16" cy="13" r="5.500" fill="#666" />
            <path d="M13 11l3 1 1 3" stroke="#f1f1f1" />
          </Ico>
        </ViewBtn>
        <ZoomSign $ml={3}>−</ZoomSign>
        <Zoom><ZoomThumb /></Zoom>
        <ZoomSign>+</ZoomSign>
        <ZoomPct>100%</ZoomPct>
      </StatusBar>

      <Menu>
        <MenuHead>テーマの色</MenuHead>
        <SwatchRow $mt={1}>
          {themeTop.map((c, i) => (
            <Swatch key={c} $c={c} $sel={i === 4} />
          ))}
        </SwatchRow>
        <SwatchRow $mt={5}>
          {ramps.map((r, i) => (
            <Ramp key={i}>
              {r.map((c, j) => (
                <RampCell key={c + j} $c={c} $sel={i === 9 && j === 2} />
              ))}
            </Ramp>
          ))}
        </SwatchRow>
        <MenuHead $mt={3}>標準の色</MenuHead>
        <SwatchRow $mt={3}>
          {standard.map((c) => (
            <Swatch key={c} $c={c} />
          ))}
        </SwatchRow>
        <NoFill><NoFillBox />塗りつぶしなし<Mnem>(<Key>N</Key>)</Mnem></NoFill>
        <MenuItems>
          <MenuItem><MenuIcon><Pie /></MenuIcon>塗りつぶしの色<Mnem>(<Key>M</Key>)</Mnem><Dots>…</Dots></MenuItem>
          <MenuItem><MenuIcon><PictureItem /></MenuIcon>図<Mnem>(<Key>P</Key>)</Mnem><Dots>…</Dots></MenuItem>
          <MenuItem><MenuIcon><GradientItem /></MenuIcon>グラデーション<Mnem>(<Key>G</Key>)</Mnem><MenuArrow /></MenuItem>
          <MenuItem><MenuIcon><TextureItem /></MenuIcon>テクスチャ<Mnem>(<Key>T</Key>)</Mnem><MenuArrow /></MenuItem>
        </MenuItems>
      </Menu>

      <Annotations width="1800" height="300" viewBox="0 0 1800 300" fill="none">
        <ellipse cx="634" cy="113.500" rx="103" ry="27.500" stroke="#ed1c24" strokeWidth="8" />
        <ellipse cx="778" cy="240" rx="26" ry="25" stroke="#ed1c24" strokeWidth="8" />
      </Annotations>
    </Root>
  );
}
